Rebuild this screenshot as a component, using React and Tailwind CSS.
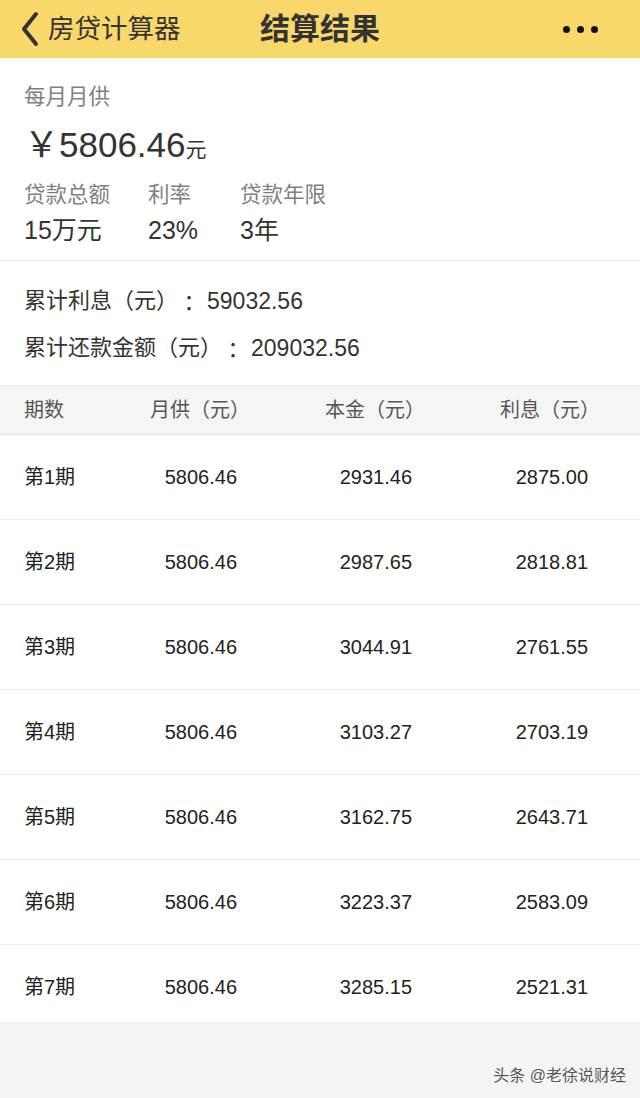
import React from "react";

const rows = [
  ["第1期", "5806.46", "2931.46", "2875.00"],
  ["第2期", "5806.46", "2987.65", "2818.81"],
  ["第3期", "5806.46", "3044.91", "2761.55"],
  ["第4期", "5806.46", "3103.27", "2703.19"],
  ["第5期", "5806.46", "3162.75", "2643.71"],
  ["第6期", "5806.46", "3223.37", "2583.09"],
  ["第7期", "5806.46", "3285.15", "2521.31"],
];

const font = {
  fontFamily: '"Liberation Sans", "Noto Sans CJK SC", sans-serif',
};

function Header() {
  return (
    <div className="relative flex h-[58px] items-center bg-[#f8d86a] text-[#333]">
      {/* back */}
      <div className="flex items-center pl-[20px]">
        <svg width="20" height="36" viewBox="0 0 20 36">
          <polyline
            points="16,3 4,18 16,33"
            fill="none"
            stroke="#333"
            strokeWidth="4"
            strokeLinecap="round"
            strokeLinejoin="round"
          />
        </svg>
        <span className="ml-[8px] text-[26.5px] leading-none">房贷计算器</span>
      </div>
      <div className="absolute left-0 right-0 top-0 flex h-full items-center justify-center pointer-events-none">
        <span className="text-[30px] font-bold leading-none">结算结果</span>
      </div>
      <div className="ml-auto flex items-center gap-[7px] pr-[42px]">
        <span className="h-[7px] w-[7px] rounded-full bg-[#111]" />
        <span className="h-[7px] w-[7px] rounded-full bg-[#111]" />
        <span className="h-[7px] w-[7px] rounded-full bg-[#111]" />
      </div>
    </div>
  );
}

function Summary() {
  return (
    <div className="border-b border-[#e8e8e8] bg-white px-[24px] pt-[24px] pb-[14px]">
      <div className="h-[30px] text-[21.5px] leading-[30px] text-[#808080]">每月月供</div>
      <div className="mt-[11px] flex h-[44px] items-end leading-[44px] text-[#333]">
        <span className="text-[35px]">￥5806.46</span>
        <span className="mb-[2px] text-[21px] leading-[30px]">元</span>
      </div>
      <div className="mt-[13px] flex">
        <div className="w-[124px]">
          <div className="h-[30px] text-[21.5px] leading-[30px] text-[#808080]">贷款总额</div>
          <div className="mt-[4px] h-[32px] text-[25px] leading-[32px] text-[#333]">15万元</div>
        </div>
        <div className="w-[92px]">
          <div className="h-[30px] text-[21.5px] leading-[30px] text-[#808080]">利率</div>
          <div className="mt-[4px] h-[32px] text-[25px] leading-[32px] text-[#333]">23%</div>
        </div>
        <div>
          <div className="h-[30px] text-[21.5px] leading-[30px] text-[#808080]">贷款年限</div>
          <div className="mt-[4px] h-[32px] text-[25px] leading-[32px] text-[#333]">3年</div>
        </div>
      </div>
    </div>
  );
}

function TotalLine({ label, value, className }) {
  return (
    <div className={"flex h-[32px] items-center whitespace-pre text-[22px] leading-[32px] " + className}>
      <span>{label}</span>
      <span className="inline-block w-[22px] text-center font-['Noto_Sans_CJK_TC',sans-serif]">：</span>
      <span className="ml-[7px] text-[23px]">{value}</span>
    </div>
  );
}

function Totals() {
  return (
    <div className="bg-white px-[24px] pt-[24px] pb-[21px] text-[#333]">
      <TotalLine label="累计利息（元）" value="59032.56" className="" />
      <TotalLine label="累计还款金额（元）" value="209032.56" className="mt-[15px]" />
    </div>
  );
}

function Table() {
  return (
    <div>
      <div className="grid h-[50px] grid-cols-[75px_175px_175px_175px] items-center border-y border-[#e6e6e6] bg-[#f5f5f5] text-[20px] text-[#555]">
        <div className="pl-[24px]">期数</div>
        <div className="text-right">月供（元）</div>
        <div className="text-right">本金（元）</div>
        <div className="text-right">利息（元）</div>
      </div>
      <div className="h-[587px] overflow-hidden bg-white">
        {rows.map((r) => (
          <div
            key={r[0]}
            className="grid h-[85px] grid-cols-[65px_172px_175px_176px] items-center border-b border-[#ececec] text-[20px] text-[#222]"
          >
            <div className="whitespace-nowrap pl-[24px]">{r[0]}</div>
            <div className="text-right">{r[1]}</div>
            <div className="text-right">{r[2]}</div>
            <div className="text-right">{r[3]}</div>
          </div>
        ))}
      </div>
    </div>
  );
}

export default function App() {
  return (
    <div className="relative h-[1098px] w-[640px] overflow-hidden bg-[#f4f4f4]" style={font}>
      <Header />
      <Summary />
      <Totals />
      <Table />
      {/* watermark */}
      <div className="absolute bottom-[10px] right-[14px] text-[16px] text-[#555] [text-shadow:0_0_2px_#fff]">
        头条 @老徐说财经
      </div>
    </div>
  );
}
